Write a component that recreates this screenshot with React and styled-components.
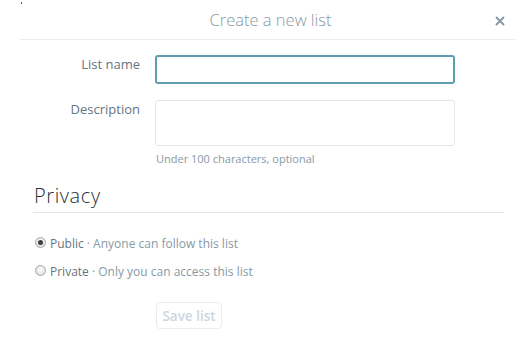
import React from "react";
import styled, { createGlobalStyle } from "styled-components";

const Global = createGlobalStyle`
  html, body { margin: 0; padding: 0; background: #fff; }
  body { font-family: "Open Sans", "Liberation Sans", Arial, sans-serif; }
  * { box-sizing: border-box; }
`;

const Dialog = styled.div`
  position: relative;
  width: 515px;
  height: 344px;
  background: #fff;
`;

const Dot = styled.span`
  position: absolute;
  left: 21px;
  top: 2px;
  width: 1px;
  height: 2px;
  background: #555;
`;

const Header = styled.div`
  margin-left: 20px;
  height: 40px;
  border-bottom: 1px solid #e6ecf0;
  display: flex;
  align-items: center;
  justify-content: center;
  position: relative;
`;

const Title = styled.h3`
  margin: 0 0 1px 6px;
  font-weight: 300;
  font-size: 16.5px;
  color: #8899a6;
`;

const Close = styled.button`
  position: absolute;
  right: 9px;
  top: 15px;
  width: 12px;
  height: 12px;
  padding: 0;
  border: 0;
  background: none;
  display: flex;
  align-items: center;
  justify-content: center;
`;

const Form = styled.div`
  padding-top: 15px;
  display: flex;
  flex-direction: column;
`;

const Row = styled.div`
  display: grid;
  grid-template-columns: 140px 300px;
  column-gap: 15px;
  margin-bottom: ${(p) => p.$mb || 0}px;
`;

const Label = styled.label`
  text-align: right;
  font-size: 13px;
  color: #66757f;
  padding-top: ${(p) => p.$pt || 0}px;
  line-height: 16px;
`;

const Field = styled.div`
  display: flex;
  flex-direction: column;
`;

const TextInput = styled.input`
  width: 300px;
  height: 29px;
  border: 2px solid #5d9fb0;
  border-radius: 3px;
  outline: none;
  padding: 0 6px;
  font: inherit;
`;

const TextArea = styled.textarea`
  width: 300px;
  height: 46px;
  border: 1px solid #e1e8ed;
  border-radius: 3px;
  resize: none;
  outline: none;
  font: inherit;
`;

const Help = styled.p`
  margin: 6px 0 0 1px;
  font-size: 11px;
  line-height: 14px;
  color: #8899a6;
`;

const Section = styled.div`
  margin: 17px 11px 0 33px;
`;

const SectionTitle = styled.h2`
  margin: 0;
  padding: 0 0 3px 1px;
  font-size: 20px;
  letter-spacing: 0.6px;
  font-weight: 300;
  line-height: 26px;
  color: #292f33;
  border-bottom: 1px solid #e1e8ed;
`;

const Options = styled.div`
  margin: 23px 0 0 2px;
  display: flex;
  flex-direction: column;
  gap: 12px;
`;

const Option = styled.label`
  display: flex;
  align-items: center;
  gap: 4px;
  font-size: 12px;
  line-height: 16px;
  color: #8899a6;
`;

const Radio = styled.span`
  width: 11px;
  height: 11px;
  border-radius: 50%;
  border: 1px solid #a8a8a8;
  background: radial-gradient(circle at 50% 40%, #fdfdfd 0%, #d6d6d6 100%);
  display: flex;
  align-items: center;
  justify-content: center;
  margin-top: -3px;
  &::after {
    content: "";
    width: 5px;
    height: 5px;
    border-radius: 50%;
    background: ${(p) => (p.$checked ? "#3d3d3d" : "transparent")};
  }
`;

const OptName = styled.span`
  color: #66757f;
`;

const Actions = styled.div`
  margin: 22px 0 0 156px;
`;

const SaveButton = styled.button`
  width: 66px;
  height: 27px;
  border: 1px solid #e6ecf0;
  border-radius: 4px;
  background: #fff;
  color: #ccd6dd;
  font-family: inherit;
  font-size: 13.5px;
  font-weight: 600;
  padding: 0;
`;

export default function App() {
  return (
    <>
      <Global />
      <Dialog>
        <Dot />
        <Header>
          <Title>Create a new list</Title>
          <Close aria-label="Close">
            <svg width="10" height="10" viewBox="0 0 10 10">
              <path d="M1 1 L9 9 M9 1 L1 9" stroke="#8899a6" strokeWidth="2" strokeLinecap="butt" />
            </svg>
          </Close>
        </Header>
        <Form>
          <Row $mb={16}>
            <Label $pt={1}>List name</Label>
            <Field>
              <TextInput />
            </Field>
          </Row>
          <Row>
            <Label $pt={1}>Description</Label>
            <Field>
              <TextArea />
              <Help>Under 100 characters, optional</Help>
            </Field>
          </Row>
        </Form>
        <Section>
          <SectionTitle>Privacy</SectionTitle>
          <Options>
            <Option>
              <Radio $checked />
              <span>
                <OptName>Public</OptName> · Anyone can follow this list
              </span>
            </Option>
            <Option>
              <Radio />
              <span>
                <OptName>Private</OptName> · Only you can access this list
              </span>
            </Option>
          </Options>
        </Section>
        <Actions>
          <SaveButton>Save list</SaveButton>
        </Actions>
      </Dialog>
    </>
  );
}
